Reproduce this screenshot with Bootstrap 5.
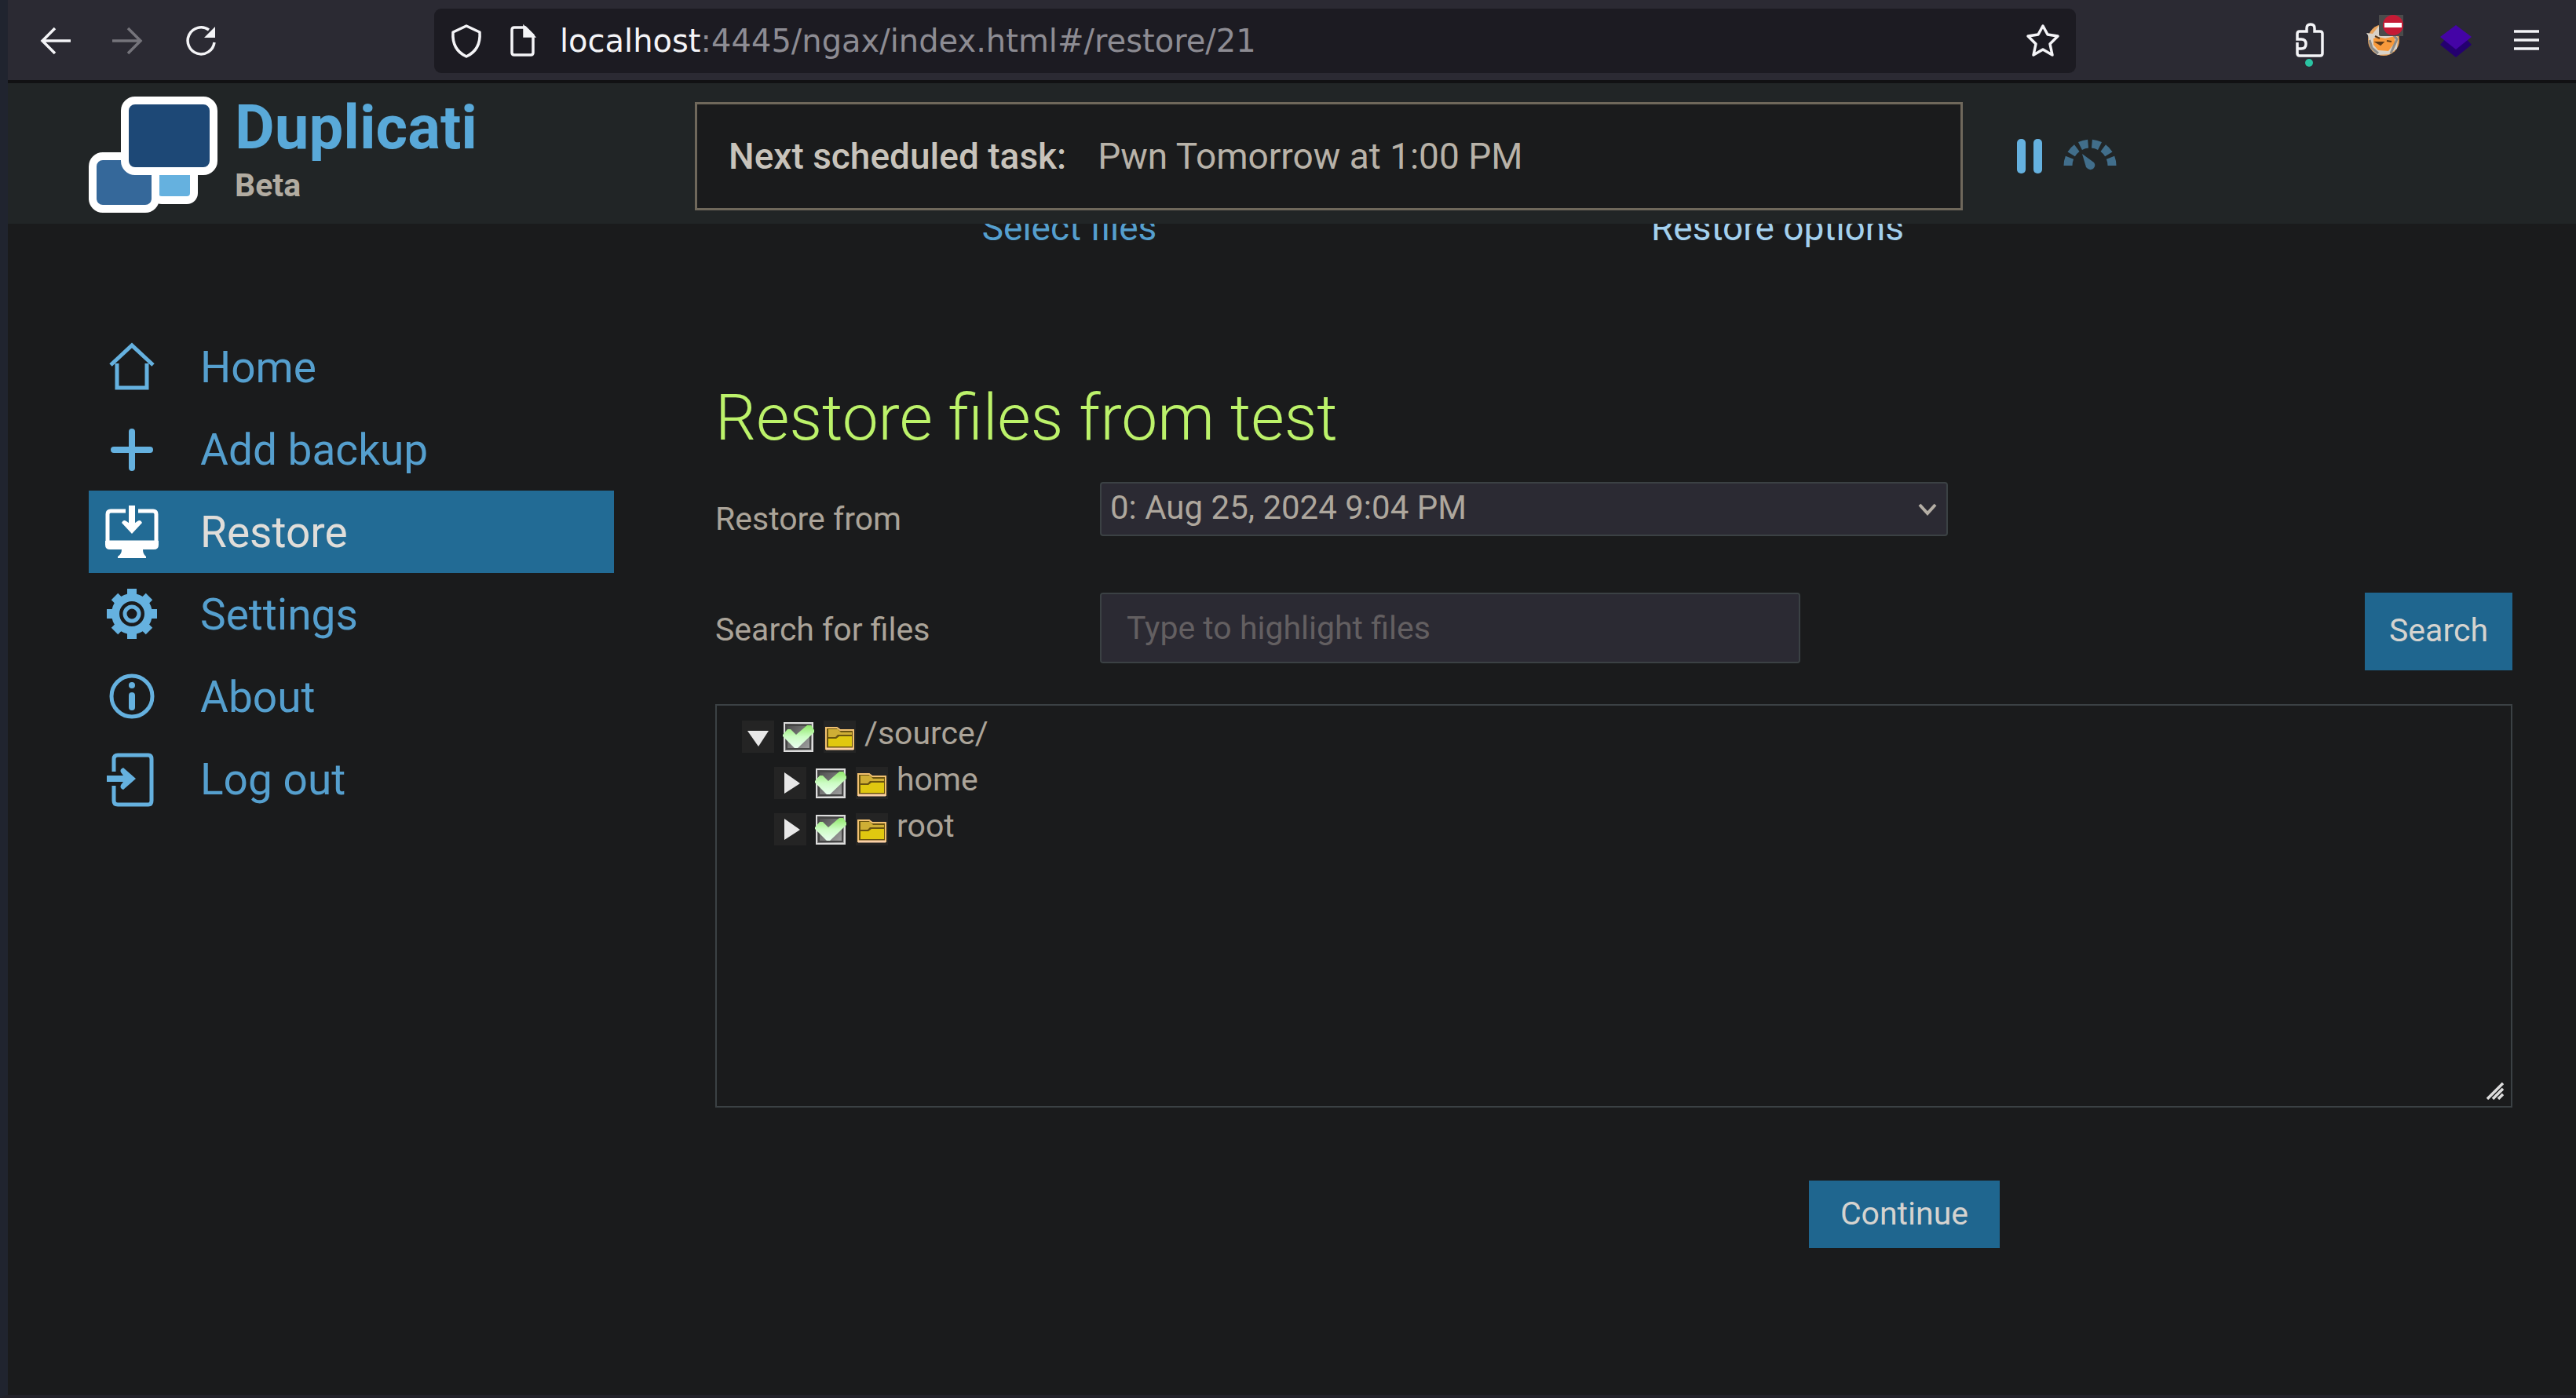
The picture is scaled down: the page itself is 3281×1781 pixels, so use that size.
<!DOCTYPE html>
<html lang="en">
<head>
<meta charset="utf-8">
<meta name="viewport" content="width=device-width, initial-scale=1">
<title>Duplicati</title>
<link href="https://cdn.jsdelivr.net/npm/bootstrap@5.3.0/dist/css/bootstrap.min.css" rel="stylesheet">
<style>
  :root { --page: #1a1b1c; --bar: #2b2a33; --sky: #559fce; --icon: #65b1df; --text: #aba499; --btn: #1f668f; --line: #3b4144; }
  body { background: var(--page); color: var(--text); font-family: Roboto, "Liberation Sans", sans-serif; font-size: 41px; line-height: 48px; min-height: 100vh; border-left: 10px solid #20242f; border-bottom: 4px solid #222129; }
  svg { display: block; flex: none; }
  a { text-decoration: none; }
  .plain { background: none; border: 0; padding: 0; color: inherit; }

  .browser-bar { height: 106px; background: var(--bar); border-bottom: 4px solid #111113; color: #f4f4f7; padding: 1px 40px 0 37px; }
  .browser-nav { gap: 47px; width: 506px; }
  .url-box { flex: 0 0 2091px; height: 82px; border-radius: 9px; background: #1c1b22; padding: 0 17px 0 16px; gap: 27px; }
  .url-text { font: 40px/50px "DejaVu Sans", sans-serif; color: #8d8c93; }
  .url-text span { color: #f4f4f7; }
  .ext-icons { gap: 46px; }

  .app-header { height: 179px; background: #212526; padding: 7px 0 0 103px; }
  .brand { width: 772px; gap: 20px; }
  .brand-name { font-size: 78px; line-height: 80px; font-weight: 700; color: #59a9d9; margin-bottom: 9px; }
  .brand-tag { font-size: 41px; line-height: 48px; font-weight: 700; color: #b2aca1; }
  .task-box { width: 1615px; height: 138px; border: 3px solid #6f685b; background: var(--page); padding: 0 40px; font-size: 46px; line-height: 54px; gap: 40px; color: #b8b2a8; }
  .task-box strong { font-weight: 500; color: #c8c3bb; }
  .task-tools { padding-left: 69px; gap: 27px; }

  .side-menu { flex: 0 0 669px; margin-left: 103px; padding-top: 130px; }
  .side-menu a { height: 105px; gap: 51px; padding-left: 19px; color: var(--sky); font-size: 55px; line-height: 64px; }
  .side-menu svg { color: var(--icon); }
  .side-menu a.active { background: #226b95; color: #e0ddd9; }
  .side-menu a.active svg { color: #fff; }

  .content-pane { margin: 0 81px 0 129px; min-width: 0; }
  .step-row { height: 32px; overflow: hidden; width: 1804px; font-size: 46px; line-height: 54px; }
  .step-row a { color: var(--sky); }
  .step-row a.current { color: #a3d0ee; }
  h1 { margin: 167px 0 0; font-size: 82px; line-height: 96px; font-weight: 300; color: #bcf26a; }
  .field-label { width: 490px; padding-top: 23px; }
  .dark-field { background-color: var(--bar); border: 2px solid var(--line); border-radius: 4px; color: #aea79d; font-size: 42px; line-height: 48px; }
  .restore-row { margin-top: 34px; height: 69px; }
  .restore-row .dark-field { width: 1080px; height: 69px; padding: 6px 60px 10px 11px; background-size: 24px 20px; background-position: right 12px center;
    background-image: url("data:image/svg+xml,%3Csvg xmlns='http://www.w3.org/2000/svg' viewBox='0 0 24 20'%3E%3Cpath d='M2 4l10 11L22 4' fill='none' stroke='%23b4aea5' stroke-width='4'/%3E%3C/svg%3E"); }
  .search-row { margin-top: 72px; height: 99px; }
  .search-row .dark-field { width: 892px; height: 90px; padding: 18px 32px; font-size: 41px; }
  .dark-field::placeholder { color: #635f61; opacity: 1; }
  .dup-btn { border: 0; border-radius: 0; background: var(--btn); color: #d5d3cf; font-size: 41px; line-height: 48px; }
  .search-btn { width: 188px; height: 99px; padding: 0 0 4px; }
  .tree-box { margin-top: 43px; height: 514px; border: 2px solid var(--line); padding: 7px 32px; position: relative; }
  .tree-box ul { margin: 0; padding: 0; list-style: none; }
  .tree-box ul ul { padding-left: 41px; }
  .tree-line { height: 59px; line-height: 56px; gap: 11px; }
  .tree-line > label { gap: 11px; }
  .tree-icon { width: 41px; height: 41px; background: #242424; margin-top: 12px; }
  .tree-check { appearance: none; width: 41px; height: 41px; margin: 12px 0 0;
    background: url("data:image/svg+xml,%3Csvg xmlns='http://www.w3.org/2000/svg' viewBox='0 0 41 41'%3E%3Cdefs%3E%3ClinearGradient id='a' x2='1' y2='1'%3E%3Cstop stop-color='%23444'/%3E%3Cstop offset='1' stop-color='%23aaa'/%3E%3C/linearGradient%3E%3ClinearGradient id='b' x2='0' y2='1'%3E%3Cstop stop-color='%2390e86a'/%3E%3Cstop offset='.5' stop-color='%23ccfcc4'/%3E%3Cstop offset='1' stop-color='%23eafff0'/%3E%3C/linearGradient%3E%3C/defs%3E%3Cpath d='M2 3h36v36H2z' fill='url(%23a)' stroke='%23ddd' stroke-width='2'/%3E%3Cpath d='M5 6h30v30H5z' fill='none' stroke='%23444' stroke-width='2'/%3E%3Cpath d='M0 18l6-7h4l7 7L31 6h5l4 6v3L19 35h-4L0 20z' fill='url(%23b)'/%3E%3C/svg%3E") center / 41px; }
  .grip { position: absolute; right: 9px; bottom: 8px; }
  .action-row { margin-top: 93px; padding-right: 653px; }
  .continue-btn { padding: 18px 40px 20px; }
</style>
</head>
<body>
<svg width="0" height="0" class="position-absolute" aria-hidden="true">
  <symbol id="folder" viewBox="0 0 41 41">
    <path d="M3 9h14l4 3h17v24H3z" fill="#6a5410" stroke="#f2c170" stroke-width="2"/>
    <path d="M6 11h12l4 4h14v3H18l-3 3H6z" fill="#cfae35"/>
    <path d="M6 23h10l4-3h16v13H6z" fill="#e0c810"/>
    <path d="M3 36h35" stroke="#fbd0a6" stroke-width="3"/>
  </symbol>
</svg>

<nav class="browser-bar d-flex align-items-center" aria-label="Browser">
  <div class="browser-nav d-flex align-items-center">
    <button class="plain" aria-label="Back"><svg width="46" height="46" viewBox="0 0 46 46" fill="none" stroke="currentColor" stroke-width="3.5"><path d="M43 23H8M23 7L7 23l16 16"/></svg></button>
    <button class="plain" aria-label="Forward"><svg width="46" height="46" viewBox="0 0 46 46" fill="none" stroke="#75747b" stroke-width="3.5"><path d="M3 23h35M23 7l16 16-16 16"/></svg></button>
    <button class="plain" aria-label="Reload"><svg width="46" height="46" viewBox="0 0 46 46"><path d="M40 25A17 17 0 1 1 33 9" fill="none" stroke="currentColor" stroke-width="3.5"/><path d="M41 5v14H27z" fill="currentColor"/></svg></button>
  </div>
  <div class="url-box d-flex align-items-center">
    <svg width="50" height="46" viewBox="0 0 50 46" fill="none" stroke="currentColor" stroke-width="3.5"><path d="M25 4l17 8c1 14-4 25-17 31C12 37 7 26 8 12z" stroke-linejoin="round"/></svg>
    <svg width="40" height="46" viewBox="0 0 40 46" fill="none" stroke="currentColor" stroke-width="3.5"><path d="M9 6h14l10 10v22q0 3-3 3H9q-3 0-3-3V9q0-3 3-3z"/><path d="M22 6v11h11z" fill="currentColor"/></svg>
    <div class="url-text flex-grow-1"><span>localhost</span>:4445/ngax/index.html#/restore/21</div>
    <button class="plain" aria-label="Bookmark"><svg width="50" height="46" viewBox="0 0 50 46" fill="none" stroke="currentColor" stroke-width="3.5" stroke-linejoin="round"><path d="M25 4l6 11 13 2-10 10 3 14-12-7-12 7 3-14-10-10 13-2z"/></svg></button>
  </div>
  <div class="ext-icons d-flex align-items-center ms-auto">
    <svg width="42" height="66" viewBox="0 0 42 66"><path d="M5 36v14q0 3 3 3h26q3 0 3-3V25q0-3-3-3h-7v-4q0-5-5-5t-5 5v4H8q-3 0-3 3v7h5q6 0 6 6t-6 6H5" transform="translate(0 -1)" fill="none" stroke="#f4f4f7" stroke-width="3.5"/><circle cx="20" cy="61" r="5" fill="#2ac3a2"/></svg>
    <svg width="52" height="66" viewBox="-5 0 52 66"><circle cx="22" cy="32" r="20" fill="#e9a45d"/><path d="M2 26l-2-3 8 1 8-10 10-1 14 16-1 14-10 7-15 1L6 43z" fill="#d9d2c8"/><path d="M9 30l6-2 9 2 12-3v9l-8 10-13-1-6-7z" fill="#f89a3c"/><path d="M11 27l6 3M13 35h8l-3 3zM26 33l6 1" stroke="#5c3a1a" stroke-width="2" fill="#5c3a1a"/><path d="M35 26l4 5-8 18M4 32l3 10 8 7" fill="none" stroke="#8a8a88" stroke-width="3"/><rect x="16" y="-1" width="36" height="28" rx="2" fill="#4b4b4b"/><circle cx="34" cy="13" r="13" fill="#c51a35"/><path d="M23 10h22v6H23z" fill="#fff"/></svg>
    <svg width="42" height="46" viewBox="0 0 42 46"><path d="M1 28l7-8h26l7 8-20 16z" fill="#24006f"/><path d="M21 3l20 15-20 16L1 18z" fill="#4404a6"/></svg>
    <button class="plain" aria-label="Menu"><svg width="46" height="46" viewBox="0 0 46 46" stroke="currentColor" stroke-width="3.5"><path d="M7 11h32M7 22h32M7 33h32"/></svg></button>
  </div>
</nav>

<header class="app-header d-flex align-items-center">
  <a class="brand d-flex" href="#">
    <svg width="166" height="152" viewBox="0 3 166 152">
      <rect x="84" y="80" width="50" height="55" rx="9" fill="#65b1df" stroke="#fff" stroke-width="10"/>
      <rect x="5" y="79" width="80" height="67" rx="13" fill="#35689a" stroke="#fff" stroke-width="10"/>
      <rect x="46" y="8" width="113" height="90" rx="13" fill="#1d4876" stroke="#fff" stroke-width="10"/>
    </svg>
    <span><span class="brand-name d-block">Duplicati</span><span class="brand-tag d-block">Beta</span></span>
  </a>
  <div class="task-box d-flex align-items-center"><strong>Next scheduled task:</strong><span>Pwn Tomorrow at 1:00 PM</span></div>
  <div class="task-tools d-flex align-items-center">
    <button class="plain" aria-label="Pause"><svg width="32" height="44" viewBox="0 0 32 44" fill="#65b1df"><rect width="11" height="44" rx="5"/><rect x="21" width="11" height="44" rx="5"/></svg></button>
    <button class="plain" aria-label="Throttle"><svg width="68" height="44" viewBox="0 0 68 44" fill="none"><path d="M6 34A28 28 0 0 1 62 34" stroke="#416e8b" stroke-width="11" pathLength="100" stroke-dasharray="12 5.6"/><path d="M24 19l15 11q3 4-1 8-5 3-9-2z" fill="#416e8b"/></svg></button>
  </div>
</header>

<div class="d-flex">
  <nav class="side-menu" aria-label="Main">
    <a class="d-flex align-items-center" href="#"><svg width="72" height="72" viewBox="0 0 72 72" fill="none" stroke="currentColor" stroke-width="5"><path d="M17 31v31h38V31M9 33L36 8l27 25"/></svg>Home</a>
    <a class="d-flex align-items-center" href="#"><svg width="72" height="72" viewBox="0 0 72 72" fill="none" stroke="currentColor" stroke-width="8" stroke-linecap="round"><path d="M36 13v46M13 36h46"/></svg>Add backup</a>
    <a class="active d-flex align-items-center" href="#" aria-current="page"><svg width="72" height="72" viewBox="0 0 72 72"><path d="M28 9H9q-4 0-4 4v36h62V13q0-4-4-4H44" fill="none" stroke="currentColor" stroke-width="5"/><path d="M2 47h68v5q0 6-6 6H50q0 6 4 9v2H18v-2q5-3 5-9H8q-6 0-6-6z" fill="currentColor"/><path d="M36 2v30" stroke="currentColor" stroke-width="8"/><path d="M23 24q2-5 6-2l7 5 7-5q4-3 6 2L36 38z" fill="currentColor"/></svg>Restore</a>
    <a class="d-flex align-items-center" href="#"><svg width="72" height="72" viewBox="0 0 72 72" fill="none" stroke="currentColor"><circle cx="36" cy="35" r="21" stroke-width="10"/><circle cx="36" cy="35" r="9" stroke-width="5"/><path d="M36 3v9M36 58v9M4 35h9M59 35h9M14 13l7 7M51 50l7 7M58 13l-7 7M21 50l-7 7" stroke-width="12"/></svg>Settings</a>
    <a class="d-flex align-items-center" href="#"><svg width="72" height="72" viewBox="0 0 72 72" fill="none" stroke="currentColor"><circle cx="36" cy="35" r="26" stroke-width="5"/><path d="M36 34v15" stroke-width="8" stroke-linecap="round"/><circle cx="36" cy="21" r="4" fill="currentColor" stroke="none"/></svg>About</a>
    <a class="d-flex align-items-center" href="#"><svg width="72" height="72" viewBox="0 0 72 72" fill="none" stroke="currentColor" stroke-width="5"><path d="M13 26V10q0-5 5-5h39q4 0 4 5v53q0 5-4 5H18q-5 0-5-5V44"/><path d="M4 35h28" stroke-width="8"/><path d="M25 21l16 14-16 14q-5-2-3-6l6-8-6-8q-2-4 3-6z" fill="currentColor" stroke="none"/></svg>Log out</a>
  </nav>

  <main class="content-pane flex-grow-1">
    <div class="step-row d-flex align-items-end text-center">
      <a class="w-50" href="#">Select files</a>
      <a class="w-50 current" href="#">Restore options</a>
    </div>
    <h1>Restore files from test</h1>
    <div class="restore-row d-flex">
      <label class="field-label" for="version">Restore from</label>
      <select id="version" class="form-select dark-field"><option>0: Aug 25, 2024 9:04 PM</option></select>
    </div>
    <div class="search-row d-flex">
      <label class="field-label" for="filter">Search for files</label>
      <input id="filter" type="text" class="form-control dark-field" placeholder="Type to highlight files">
      <button class="btn dup-btn search-btn ms-auto">Search</button>
    </div>
    <div class="tree-box">
      <ul>
        <li>
          <div class="tree-line d-flex">
            <button class="plain tree-icon" aria-label="Collapse"><svg width="41" height="41" viewBox="0 0 41 41"><path d="M7 13h27L21 33z" fill="#e8e8e8"/></svg></button>
            <input class="tree-check" type="checkbox" id="n0" checked>
            <label class="d-flex" for="n0"><svg class="tree-icon" width="41" height="41"><use href="#folder"/></svg>/source/</label>
          </div>
          <ul>
            <li class="tree-line d-flex">
              <button class="plain tree-icon" aria-label="Expand"><svg width="41" height="41" viewBox="0 0 41 41"><path d="M13 7v27l20-13z" fill="#e8e8e8"/></svg></button>
              <input class="tree-check" type="checkbox" id="n1" checked>
              <label class="d-flex" for="n1"><svg class="tree-icon" width="41" height="41"><use href="#folder"/></svg>home</label>
            </li>
            <li class="tree-line d-flex">
              <button class="plain tree-icon" aria-label="Expand"><svg width="41" height="41" viewBox="0 0 41 41"><path d="M13 7v27l20-13z" fill="#e8e8e8"/></svg></button>
              <input class="tree-check" type="checkbox" id="n2" checked>
              <label class="d-flex" for="n2"><svg class="tree-icon" width="41" height="41"><use href="#folder"/></svg>root</label>
            </li>
          </ul>
        </li>
      </ul>
      <svg class="grip" width="22" height="22" viewBox="0 0 22 22" stroke="#dcdcdc" stroke-width="3.500"><path d="M1 21L21 1M8 21L21 8M15 21l6-6"/></svg>
    </div>
    <div class="action-row d-flex justify-content-end">
      <button class="btn dup-btn continue-btn">Continue</button>
    </div>
  </main>
</div>
<script src="https://cdn.jsdelivr.net/npm/bootstrap@5.3.0/dist/js/bootstrap.bundle.min.js"></script>
</body>
</html>
